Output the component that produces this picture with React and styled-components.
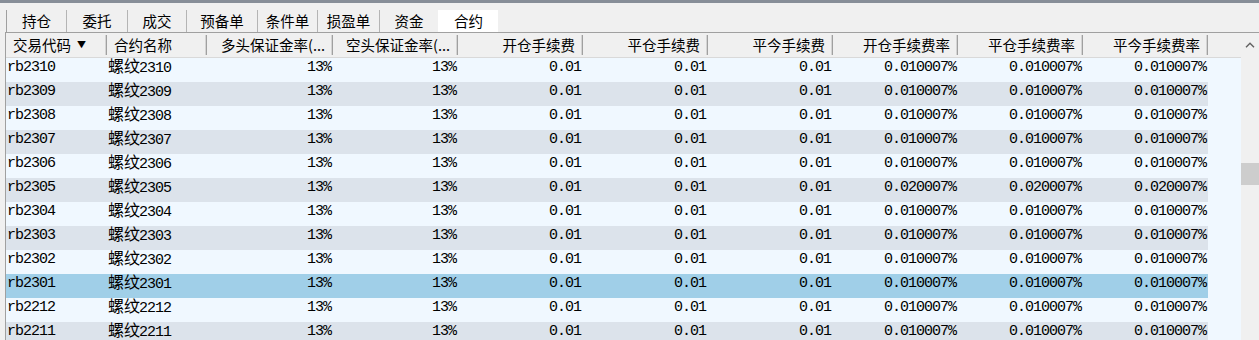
import React from "react";
import styled, { createGlobalStyle } from "styled-components";

const GlobalStyle = createGlobalStyle`
  html, body {
    margin: 0;
    padding: 0;
    background: #f0f0f0;
    overflow: hidden;
  }
  body {
    font-family: "Noto Sans CJK SC", "Noto Sans", sans-serif;
    color: #000;
  }
`;

const TABS = [
  { label: "持仓", width: 60 },
  { label: "委托", width: 61 },
  { label: "成交", width: 59 },
  { label: "预备单", width: 71 },
  { label: "条件单", width: 60 },
  { label: "损盈单", width: 62 },
  { label: "资金", width: 59 },
  { label: "合约", width: 60, active: true },
];

const COLUMNS = [
  { key: "code", title: "交易代码", width: 101, align: "left", sort: true },
  { key: "name", title: "合约名称", width: 100, align: "left" },
  { key: "longMargin", title: "多头保证金率(...", width: 126 },
  { key: "shortMargin", title: "空头保证金率(...", width: 125 },
  { key: "openFee", title: "开仓手续费", width: 125 },
  { key: "closeFee", title: "平仓手续费", width: 125 },
  { key: "closeTodayFee", title: "平今手续费", width: 125 },
  { key: "openRate", title: "开仓手续费率", width: 125 },
  { key: "closeRate", title: "平仓手续费率", width: 125 },
  { key: "closeTodayRate", title: "平今手续费率", width: 125 },
];

const CODES = ["2310", "2309", "2308", "2307", "2306", "2305", "2304", "2303", "2302", "2301", "2212", "2211"];

const ROWS = CODES.map((c) => {
  const rate = c === "2305" ? "0.020007%" : "0.010007%";
  return {
    code: "rb" + c,
    num: c,
    longMargin: "13%",
    shortMargin: "13%",
    openFee: "0.01",
    closeFee: "0.01",
    closeTodayFee: "0.01",
    openRate: rate,
    closeRate: rate,
    closeTodayRate: rate,
    selected: c === "2301",
  };
});

export default function App() {
  return (
    <>
      <GlobalStyle />
      <Page>
        <TopBar />
        <TabStrip>
          {TABS.map((t) => (
            <Tab key={t.label} $width={t.width} $active={t.active}>
              {t.label}
            </Tab>
          ))}
        </TabStrip>
        <Grid>
          <TableArea>
            <HeaderRow>
              {COLUMNS.map((col) => (
                <HeaderCell key={col.key} $width={col.width} $align={col.align}>
                  {col.title}
                  {col.sort && <SortArrow>▼</SortArrow>}
                </HeaderCell>
              ))}
            </HeaderRow>
            {ROWS.map((row, i) => (
              <Row key={row.code}>
                <RowCells $alt={i % 2 === 1} $selected={row.selected}>
                  {COLUMNS.map((col) => (
                    <Cell key={col.key} $width={col.width} $align={col.align}>
                      {col.key === "name" ? (
                        <>
                          <Han>螺纹</Han>
                          {row.num}
                        </>
                      ) : (
                        row[col.key]
                      )}
                    </Cell>
                  ))}
                </RowCells>
              </Row>
            ))}
          </TableArea>
          <ScrollBar>
            <ScrollButton>
              <svg width="10" height="6" viewBox="0 0 10 6">
                <polyline points="1,5.2 5,1.2 9,5.2" fill="none" stroke="#606060" strokeWidth="1.4" />
              </svg>
            </ScrollButton>
            <Thumb $offset={106} />
          </ScrollBar>
        </Grid>
      </Page>
    </>
  );
}

const Page = styled.div`
  width: 1259px;
  height: 340px;
  overflow: hidden;
  background: #f0f0f0;
`;

const TopBar = styled.div`
  height: 3px;
  background: #878e98;
`;

const TabStrip = styled.div`
  display: flex;
  height: 22px;
  margin-top: 7px;
  padding-left: 6px;
`;

const Tab = styled.div`
  width: ${(p) => p.$width}px;
  height: 22px;
  box-sizing: border-box;
  display: flex;
  align-items: center;
  justify-content: center;
  font-size: 14.5px;
  line-height: 22px;
  background: ${(p) => (p.$active ? "#ffffff" : "transparent")};
  border-left: 1px solid ${(p) => (p.$active ? "transparent" : "#b4b4b4")};
  &:first-child {
    border-left-color: #a0a0a0;
  }
`;

const Grid = styled.div`
  display: flex;
  margin-left: 5px;
  border-top: 1px solid #a0a0a0;
  border-left: 1px solid #a0a0a0;
  height: 308px;
`;

const TableArea = styled.div`
  flex: 1;
  background: #f0f8ff;
  overflow: hidden;
`;

const HeaderRow = styled.div`
  display: flex;
  height: 24px;
  background: #f0f0f0;
  border-bottom: 1px solid #d9d9d9;
`;

const HeaderCell = styled.div`
  position: relative;
  width: ${(p) => p.$width}px;
  flex: none;
  box-sizing: border-box;
  display: flex;
  align-items: center;
  justify-content: ${(p) => (p.$align === "left" ? "flex-start" : "flex-end")};
  padding: ${(p) => (p.$align === "left" ? "0 0 0 7px" : "0 8px 0 0")};
  font-size: 14.5px;
  line-height: 24px;
  white-space: nowrap;
  &::after {
    content: "";
    position: absolute;
    right: 0;
    top: 2px;
    bottom: 2px;
    width: 1px;
    background: #a0a0a0;
    box-shadow: -1px 0 0 #d4d4d4;
  }
`;

const SortArrow = styled.span`
  font-size: 9px;
  margin-left: 6px;
  line-height: 24px;
`;

const Row = styled.div`
  height: 24px;
  display: flex;
`;

const RowCells = styled.div`
  display: flex;
  background: ${(p) => (p.$selected ? "#a0cfe8" : p.$alt ? "#dce3eb" : "#f0f8ff")};
`;

const Cell = styled.div`
  width: ${(p) => p.$width}px;
  flex: none;
  box-sizing: border-box;
  height: 24px;
  line-height: 20px;
  padding: ${(p) => (p.$align === "left" ? "0 0 0 1px" : "0 2px 0 0")};
  text-align: ${(p) => (p.$align === "left" ? "left" : "right")};
  font-family: "Liberation Mono", "Noto Sans CJK SC", monospace;
  font-size: 15px;
  letter-spacing: -1px;
  white-space: nowrap;
`;

const Han = styled.span`
  font-family: "Noto Sans CJK SC", sans-serif;
  font-size: 16px;
  letter-spacing: 0;
  line-height: 14px;
  margin-right: -1px;
`;

const ScrollBar = styled.div`
  width: 18px;
  flex: none;
  background: #f0f0f0;
  display: flex;
  flex-direction: column;
`;

const ScrollButton = styled.div`
  height: 24px;
  display: flex;
  align-items: center;
  justify-content: center;
  padding-right: 1px;
`;

const Thumb = styled.div`
  margin-top: ${(p) => p.$offset}px;
  height: 22px;
  background: #cdcdcd;
`;
